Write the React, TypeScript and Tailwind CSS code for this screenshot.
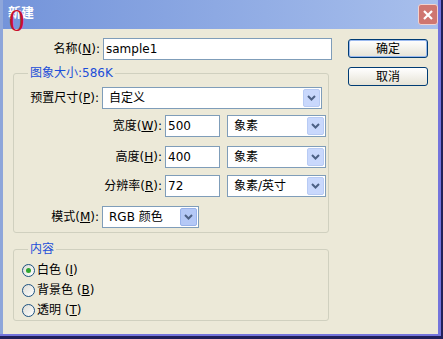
import React from "react";

const CJK = "font-['Tahoma','DejaVu_Sans','Noto_Sans_CJK_SC',sans-serif]";

function Mn({ text, k }: { text: string; k: string }) {
  return (
    <span>
      {text}(<span className="underline">{k}</span>):
    </span>
  );
}

function Chevron() {
  return (
    <svg width="9" height="6" viewBox="0 0 9 6">
      <path d="M1 1 L4.5 4.5 L8 1" fill="none" stroke="#4d6185" strokeWidth="2" />
    </svg>
  );
}

function Select({ value, w, strong }: { value: string; w: string; strong?: boolean }) {
  return (
    <div className={`${w} h-[22px] flex items-center bg-white border border-[#7f9db9]`}>
      <span className="flex-1 pl-[6px] text-[12px] leading-none text-black">{value}</span>
      <div
        className={`w-[17px] h-[18px] mr-[1px] flex items-center justify-center rounded-[2px] border ${
          strong ? "bg-[#b4c8f6] border-[#98b2ea]" : "bg-[#c9d8fc] border-[#b8cbf4]"
        }`}
      >
        <Chevron />
      </div>
    </div>
  );
}

function Input({ value, w }: { value: string; w: string }) {
  return (
    <div className={`${w} h-[22px] flex items-center bg-white border border-[#7f9db9] pl-[2px] text-[12px] text-black`}>
      {value}
    </div>
  );
}

function Radio({ checked, label, k }: { checked?: boolean; label: string; k: string }) {
  return (
    <div className="h-[20px] flex items-center pl-[8px] gap-[2px]">
      <div className="w-[13px] h-[13px] rounded-full border border-[#1c5180] bg-gradient-to-br from-[#dcdcd5] to-white flex items-center justify-center">
        {checked && <div className="w-[5px] h-[5px] rounded-full bg-[#2fa52f]" />}
      </div>
      <span className="text-[12px] text-black">
        {label} (<span className="underline">{k}</span>)
      </span>
    </div>
  );
}

function XPButton({ label, def }: { label: string; def?: boolean }) {
  return (
    <div
      className={`w-[80px] h-[19px] rounded-[3px] border border-[#003c74] bg-gradient-to-b from-white to-[#e6e3d6] flex items-center justify-center text-[12px] text-black ${
        def ? "shadow-[inset_0_0_0_1px_#9ab9ef]" : ""
      }`}
    >
      {label}
    </div>
  );
}

export default function App() {
  return (
    <div className={`w-[443px] h-[339px] relative flex flex-col bg-[#20205a] ${CJK}`}>
      <div className="flex-1 flex flex-col mr-[2px] mb-[3px] bg-[#7474dc] pr-[3px] pb-[2px]">
        <div className="flex-1 flex flex-col border-l-[3px] border-[#8ea6da]">
          {/* Title bar */}
          <div className="h-[29px] flex items-start justify-between bg-gradient-to-r from-[#7494da] to-[#a8bfec]">
            <span className="mt-[3px] ml-[5px] text-[13px] font-bold text-white">新建</span>
            <div className="mt-[4px] w-[20px] h-[21px] rounded-[3px] border border-[#f1d2cf] bg-[#cf7670] flex items-center justify-center">
              <svg width="12" height="12" viewBox="0 0 12 12">
                <path d="M2 2 L10 10 M10 2 L2 10" stroke="white" strokeWidth="2.2" />
              </svg>
            </div>
          </div>

          {/* Body */}
          <div className="flex-1 bg-[#ece9d8] flex pl-[10px] pt-[9px]">
            <div className="w-[319px] flex flex-col">
              <div className="h-[22px] flex items-center gap-[3px]">
                <span className="w-[87px] text-right text-[12px] text-black">
                  <Mn text="名称" k="N" />
                </span>
                <Input value="sample1" w="w-[229px]" />
              </div>

              <fieldset className="w-[316px] mt-[6px] border border-[#d0d0bf] rounded-[3px] pt-[7px] pb-[4px]">
                <legend className="ml-[14px] px-[2px] text-[12px] leading-[14px] text-[#1c4ed8]">
                  图象大小:586K
                </legend>
                <div className="h-[21px] flex items-center gap-[3px]">
                  <span className="w-[85px] text-right text-[12px] text-black">
                    <Mn text="预置尺寸" k="P" />
                  </span>
                  <Select value="自定义" w="w-[220px] h-[21px]" />
                </div>
                <div className="h-[22px] mt-[7px] flex items-center gap-[3px]">
                  <span className="w-[148px] text-right text-[12px] text-black">
                    <Mn text="宽度" k="W" />
                  </span>
                  <Input value="500" w="w-[55px]" />
                  <div className="w-[1px]" />
                  <Select value="象素" w="w-[99px]" />
                </div>
                <div className="h-[22px] mt-[9px] flex items-center gap-[3px]">
                  <span className="w-[148px] text-right text-[12px] text-black">
                    <Mn text="高度" k="H" />
                  </span>
                  <Input value="400" w="w-[55px]" />
                  <div className="w-[1px]" />
                  <Select value="象素" w="w-[99px]" />
                </div>
                <div className="h-[22px] mt-[7px] flex items-center gap-[3px]">
                  <span className="w-[148px] text-right text-[12px] text-black">
                    <Mn text="分辨率" k="R" />
                  </span>
                  <Input value="72" w="w-[55px]" />
                  <div className="w-[1px]" />
                  <Select value="象素/英寸" w="w-[99px]" />
                </div>
                <div className="h-[22px] mt-[9px] flex items-center gap-[3px]">
                  <span className="w-[85px] text-right text-[12px] text-black">
                    <Mn text="模式" k="M" />
                  </span>
                  <Select value="RGB 颜色" w="w-[97px]" strong />
                </div>
              </fieldset>

              <fieldset className="w-[316px] mt-[9px] border border-[#d0d0bf] rounded-[3px] pt-[4px]">
                <legend className="ml-[14px] px-[2px] text-[12px] leading-[14px] text-[#1c4ed8]">内容</legend>
                <Radio checked label="白色" k="I" />
                <Radio label="背景色" k="B" />
                <Radio label="透明" k="T" />
              </fieldset>
            </div>

            <div className="ml-[16px] flex flex-col pt-[1px]">
              <XPButton label="确定" def />
              <div className="mt-[9px]">
                <XPButton label="取消" />
              </div>
            </div>
          </div>
        </div>
      </div>

      {/* red marker stamped over the title */}
      <span className="absolute left-[9px] top-[6px] text-[31px] leading-[30px] text-[#c8102e] font-['Liberation_Serif',serif]">
        0
      </span>
    </div>
  );
}
